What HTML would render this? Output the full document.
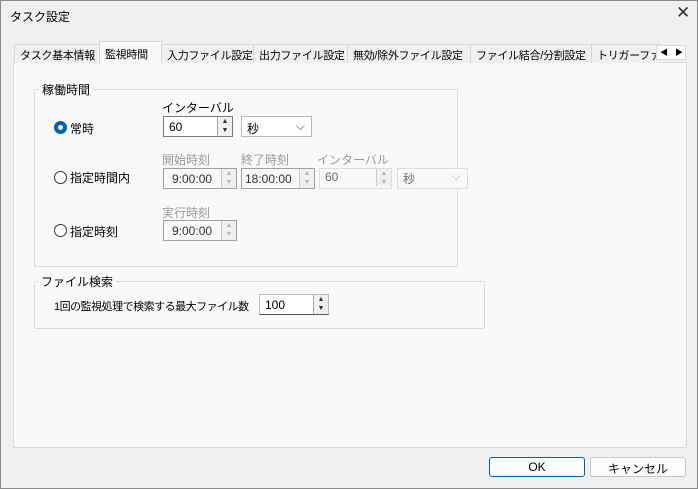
<!DOCTYPE html>
<html><head><meta charset="utf-8"><style>
*{box-sizing:border-box;margin:0;padding:0}
body{width:698px;height:489px;background:#f0f0f0;font-family:"Liberation Sans","Noto Sans CJK JP",sans-serif;font-size:12px;color:#000;position:relative;overflow:hidden;border:1px solid #8a8a8a}
.a{position:absolute;white-space:nowrap}
.tab{position:absolute;top:43px;height:19px;border:1px solid #d9d9d9;border-bottom:none;background:#f0f0f0;padding:2px 0 0 5px;font-size:11px;letter-spacing:-0.3px;white-space:nowrap;overflow:hidden}
.panel{position:absolute;left:12px;top:61px;width:674px;height:386px;background:#f9f9f9;border:1px solid #dcdcdc}
.grp{position:absolute;border:1px solid #dcdcdc;border-radius:2px}
.leg{position:absolute;background:#f9f9f9;padding:0 3px}
.box{position:absolute;height:21px;border:1px solid #7a7a7a;background:#fff;padding:3px 0 0 5px;white-space:nowrap}
.dis{border-color:#a0a0a0;background:#f9f9f9;color:#6d6d6d}
.spin{position:absolute;width:15px;height:19px;border-left:1px solid #ccc;background:#f0f0f0;top:0;right:0;font-size:7px;line-height:9px;text-align:center;color:#333}
.dis .spin{color:#b5b5b5}
.gl{color:#9a9a9a}
.rad{position:absolute;width:13px;height:13px;border:1px solid #333;border-radius:50%;background:#fff}
.btn{position:absolute;top:456px;height:20px;border:1px solid #c8c8c8;border-radius:3px;background:#fdfdfd;text-align:center;padding-top:2px}
</style></head><body>
<div class="a" style="left:9px;top:7px">タスク設定</div>
<div class="a" style="left:675px;top:2px;font-size:17px;color:#333">✕</div>
<div class="panel"></div>
<div class="tab" style="left:13px;width:86px">タスク基本情報</div>
<div class="tab" style="left:160px;width:93px">入力ファイル設定</div>
<div class="tab" style="left:252px;width:95px">出力ファイル設定</div>
<div class="tab" style="left:346px;width:124px">無効/除外ファイル設定</div>
<div class="tab" style="left:469px;width:122px">ファイル結合/分割設定</div>
<div class="tab" style="left:590px;width:70px">トリガーファイル</div>
<div class="tab" style="left:98px;top:40px;height:23px;width:63px;background:#f9f9f9;padding-top:4px">監視時間</div>
<div class="a" style="left:655px;top:44px;width:30px;height:15px;background:#fff;border:1px solid #d9d9d9;font-size:8px;line-height:13px"><span style="position:absolute;left:3px">◀</span><span style="position:absolute;left:18px">▶</span></div>

<div class="grp" style="left:33px;top:88px;width:424px;height:178px"></div>
<div class="leg a" style="left:38px;top:80px">稼働時間</div>
<div class="a" style="left:161px;top:98px">インターバル</div>
<div class="rad" style="left:53px;top:120px;border:4px solid #005fb8"></div>
<div class="a" style="left:69px;top:119px">常時</div>
<div class="box" style="left:162px;top:115px;width:70px">60<div class="spin" style="border-color:#aaa">▲<br>▼</div></div>
<div class="box" style="left:240px;top:115px;width:71px;border-color:#bbb">秒<span style="position:absolute;right:6px;top:2px;color:#555">⌵</span></div>

<div class="a gl" style="left:161px;top:150px">開始時刻</div>
<div class="a gl" style="left:240px;top:150px">終了時刻</div>
<div class="a gl" style="left:316px;top:150px">インターバル</div>
<div class="rad" style="left:53px;top:170px"></div>
<div class="a" style="left:69px;top:168px">指定時間内</div>
<div class="box dis" style="left:162px;top:167px;width:74px;color:#333;padding-left:8px">9:00:00<div class="spin">▲<br>▼</div></div>
<div class="box dis" style="left:240px;top:167px;width:74px;color:#333;padding-left:3px">18:00:00<div class="spin">▲<br>▼</div></div>
<div class="box dis" style="left:318px;top:167px;width:73px;border-color:#ddd;padding-top:1px">60<div class="spin" style="height:17px">▲<br>▼</div></div>
<div class="box dis" style="left:396px;top:167px;width:71px;border-color:#ddd;padding-top:1px">秒<span style="position:absolute;right:6px;top:0;color:#bbb">⌵</span></div>

<div class="a gl" style="left:161px;top:203px">実行時刻</div>
<div class="rad" style="left:53px;top:223px"></div>
<div class="a" style="left:69px;top:222px">指定時刻</div>
<div class="box dis" style="left:162px;top:219px;width:74px;color:#333;padding-left:8px">9:00:00<div class="spin">▲<br>▼</div></div>

<div class="grp" style="left:33px;top:280px;width:451px;height:48px"></div>
<div class="leg a" style="left:37px;top:272px">ファイル検索</div>
<div class="a" style="left:53px;top:297px;font-size:11px;letter-spacing:-0.5px">1回の監視処理で検索する最大ファイル数</div>
<div class="box" style="left:258px;top:293px;width:70px;border-color:#bbb;border-bottom-color:#555">100<div class="spin" style="border-color:#aaa">▲<br>▼</div></div>

<div class="btn" style="left:488px;width:96px;border-color:#005fb8">OK</div>
<div class="btn" style="left:589px;width:96px">キャンセル</div>
</body></html>
